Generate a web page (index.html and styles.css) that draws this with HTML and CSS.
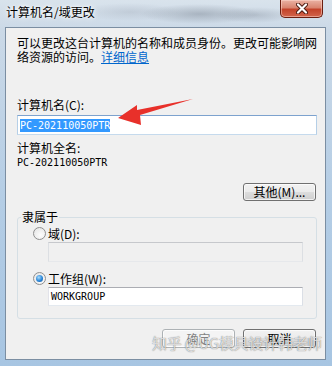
FILE: index.html
```html
<!DOCTYPE html>
<html lang="zh-CN">
<head>
 <meta charset="UTF-8">
 <title>计算机名/域更改</title>
 <link rel="stylesheet" href="styles.css">
</head>
<body>

 <div class="window">
  <div class="titlebar">
   <span class="title">计算机名/域更改</span>
   <span class="close">
    <svg width="12" height="11" viewBox="0 0 12 11">
     <path d="M2 1.5 L10 9.5 M10 1.5 L2 9.5" stroke="#4a1a10" stroke-width="4" stroke-linecap="round"/>
     <path d="M2 1.5 L10 9.5 M10 1.5 L2 9.5" stroke="#fff" stroke-width="2.2" stroke-linecap="round"/>
    </svg>
   </span>
  </div>

  <div class="client">
   <p class="intro">可以更改这台计算机的名称和成员身份。更改可能影响网<br>络资源的访问。<a href="#">详细信息</a></p>

   <div class="label name-label">计算机名(C):</div>
   <div class="field focus"><span class="mono sel">PC-202110050PTR</span></div>

   <div class="label full-label">计算机全名:</div>
   <div class="mono full-name">PC-202110050PTR</div>

   <div class="row-right more">
    <button class="btn">其他(M)...</button>
   </div>

   <fieldset class="member">
    <legend>隶属于</legend>
    <div class="member-body">
     <div class="radio-row"><span class="radio"></span>域(D):</div>
     <div class="field disabled domain"></div>
     <div class="radio-row second"><span class="radio on"></span>工作组(W):</div>
     <div class="field workgroup"><span class="mono">WORKGROUP</span></div>
    </div>
   </fieldset>

   <div class="row-right actions">
    <button class="btn" disabled>确定</button>
    <button class="btn">取消</button>
   </div>
  </div>

  <svg class="arrow" width="332" height="366" viewBox="0 0 332 366">
   <polygon points="118,118 137,105 137,110 193,99 140,115 141,125" fill="#e8302a"/>
  </svg>

  <div class="watermark">知乎 @UG模具设计韩老师</div>
 </div>

</body>
</html>
```

FILE: styles.css
```css
 * {
   box-sizing: border-box;
  }

 body {
   margin: 0;
   font-family: "Noto Sans CJK SC", "Liberation Sans", sans-serif;
   font-size: 12px;
   color: #000;
  }

 .window {
   position: relative;
   width: 332px;
   height: 366px;
   overflow: hidden;
   background:
     radial-gradient(ellipse 60px 10px at 200px 14px, rgba(90,100,115,0.35), transparent),
     radial-gradient(ellipse 40px 8px at 255px 15px, rgba(110,120,135,0.3), transparent),
     radial-gradient(ellipse 50px 9px at 130px 12px, rgba(150,160,175,0.3), transparent),
     linear-gradient(to bottom, #d9e3ec 0, #cbd9e7 30px, #b4cde5 200px, #a7c5e2 100%);
  }

  .titlebar {
   display: flex;
   align-items: flex-start;
   height: 27px;
  }

  .title {
   padding: 5px 0 0 6px;
   line-height: 14px;
   text-shadow: 0 0 6px #fff, 0 0 3px #fff;
  }

  .close {
   display: flex;
   align-items: center;
   justify-content: center;
   width: 43px;
   height: 18px;
   margin-left: auto;
   margin-right: 9px;
   border: 1px solid #6b1e10;
   border-top: none;
   border-radius: 0 0 5px 5px;
   background: linear-gradient(to bottom, #eab2a3 0, #d98570 45%, #c3432a 55%, #d2654c 100%);
   box-shadow: inset 0 0 0 1px rgba(255,220,210,0.5);
  }

  .client {
   width: 321px;
   height: 333px;
   margin-left: 5px;
   padding: 8px 8px 0 11px;
   background: #f0f0f0;
   border: 1px solid #7b8ea2;
  }

  .intro {
   margin: 0;
   line-height: 14px;
   white-space: nowrap;
  }

  .intro a {
   color: #0066cc;
  }

  .label {
   line-height: 14px;
  }

  .name-label {
   margin-top: 34px;
  }

  .full-label {
   margin-top: 6px;
  }

  .mono {
   font-family: "DejaVu Sans Mono", monospace;
   font-size: 10px;
   line-height: 13px;
  }

  .full-name {
   margin-top: 1px;
   line-height: 14px;
  }

  .field {
   display: flex;
   align-items: center;
   height: 20px;
   padding: 0 2px;
   background: #fff;
   border: 1px solid #abadb3;
   border-color: #abadb3 #dbdfe6 #e3e9ef #e2e3ea;
  }

  .field.focus {
   margin-top: 3px;
   border-color: #7da2ce #b5cfe7 #c5daed #b5cfe7;
  }

  .sel {
   background: #3399ff;
   color: #fff;
  }

  .field.disabled {
   background: #f0f0f0;
   border-color: #c6c8cc #dcdfe3 #e6e8eb #dcdfe3;
  }

  .row-right {
   display: flex;
   justify-content: flex-end;
   gap: 8px;
   margin-right: 1px;
  }

  .more {
   margin-top: 13px;
  }

  .btn {
   width: 73px;
   height: 18px;
   padding: 0;
   font-family: inherit;
   font-size: 12px;
   line-height: 14px;
   color: #000;
   border: 1px solid #707070;
   border-radius: 3px;
   background: linear-gradient(to bottom, #f2f2f2 0, #ebebeb 50%, #dddddd 50%, #cfcfcf 100%);
   box-shadow: inset 0 0 0 1px rgba(255,255,255,0.7);
  }

  .btn:disabled {
   color: #838383;
   border-color: #adb2b5;
   background: #f4f4f4;
  }

  .member {
   margin: 9px 0 0;
   padding: 0;
   border: 1px solid #d5dfe5;
   border-radius: 3px;
  }

  .member legend {
   margin-left: 3px;
   padding: 0 1px;
   line-height: 14px;
  }

  .member-body {
   padding: 2px 13px 12px 15px;
  }

  .radio-row {
   display: flex;
   align-items: center;
   height: 14px;
  }

  .radio-row.second {
   margin-top: 9px;
  }

  .radio {
   display: flex;
   align-items: center;
   justify-content: center;
   width: 13px;
   height: 13px;
   margin-right: 2px;
   border: 1px solid #8f8f8f;
   border-radius: 50%;
   background: radial-gradient(circle at 60% 65%, #fdfdfd 0, #e2e2e2 100%);
  }

  .radio.on::after {
   content: "";
   width: 7px;
   height: 7px;
   border-radius: 50%;
   background: radial-gradient(circle at 40% 35%, #a9dcfb 0, #2a86d8 55%, #11509a 100%);
  }

  .domain {
   margin: 2px 0 0 15px;
  }

  .workgroup {
   height: 19px;
   margin: 2px 0 0 15px;
  }

  .actions {
   margin-top: 10px;
  }

  .actions .btn {
   width: 73px;
   height: 19px;
  }

  .arrow {
   position: absolute;
   left: 0;
   top: 0;
   pointer-events: none;
  }

  .watermark {
   position: absolute;
   left: 152px;
   top: 333px;
   font-size: 15px;
   line-height: 20px;
   letter-spacing: -0.3px;
   white-space: nowrap;
   color: rgba(255,255,255,0.75);
   text-shadow: 0 0 1px rgba(50,50,50,0.8);
  }
```
